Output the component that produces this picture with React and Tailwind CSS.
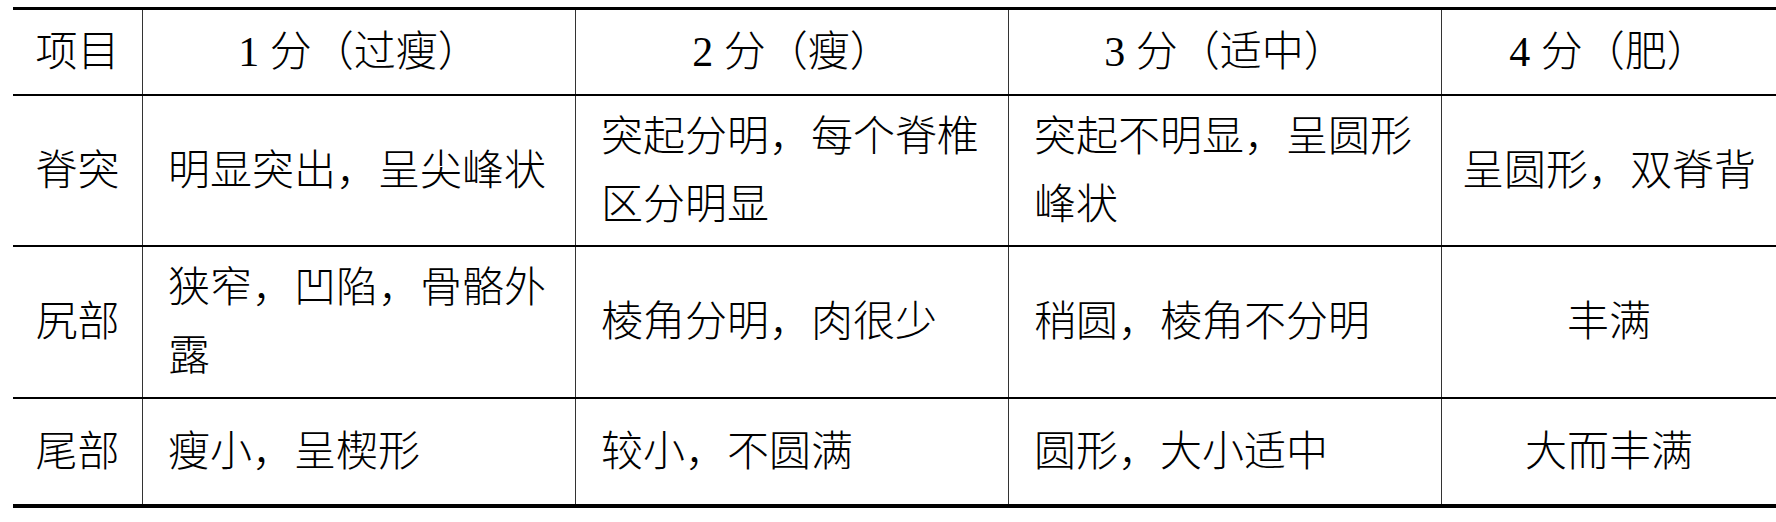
const rows = [
  {
    name: '脊突',
    cells: ['明显突出，呈尖峰状', '突起分明，每个脊椎区分明显', '突起不明显，呈圆形峰状', '呈圆形，双脊背'],
    height: 'h-[149px]',
  },
  {
    name: '尻部',
    cells: ['狭窄，凹陷，骨骼外露', '棱角分明，肉很少', '稍圆，棱角不分明', '丰满'],
    height: 'h-[150px]',
  },
  {
    name: '尾部',
    cells: ['瘦小，呈楔形', '较小，不圆满', '圆形，大小适中', '大而丰满'],
    height: 'h-[105px]',
  },
];

const headers = ['1 分（过瘦）', '2 分（瘦）', '3 分（适中）', '4 分（肥）'];

const grid = 'grid grid-cols-[129px_433px_433px_433px_335px]';

export default function App() {
  return (
    <div
      className="w-[1776px] h-[522px] bg-white text-black overflow-hidden pt-[7px] pl-[13px]"
      style={{ fontFamily: '"Liberation Serif", "Noto Sans CJK SC", serif' }}
    >
      <div className="text-[42px] font-light">
        {/* Header */}
        <div className={`${grid} h-[89px] border-t-[3px] border-b-2 border-black`}>
          <div className="flex items-center justify-center leading-[68px]">项目</div>
          {headers.map((h) => (
            <div
              key={h}
              className="flex items-center justify-center border-l border-[#333] leading-[68px] whitespace-pre"
            >
              {h}
            </div>
          ))}
        </div>

        {/* Body */}
        {rows.map((row, i) => (
          <div
            key={row.name}
            className={`${grid} ${row.height} border-black ${
              i === rows.length - 1 ? 'border-b-4 box-content' : 'border-b-2 box-content'
            }`}
          >
            <div className="flex items-center justify-center leading-[68px]">{row.name}</div>
            {row.cells.map((c, j) => (
              <div
                key={j}
                className={`flex items-center border-l border-[#333] leading-[68px] ${
                  j === 3 ? 'justify-center px-2' : 'pl-[25px] pr-[20px]'
                }`}
              >
                <span>{c}</span>
              </div>
            ))}
          </div>
        ))}
      </div>
    </div>
  );
}
